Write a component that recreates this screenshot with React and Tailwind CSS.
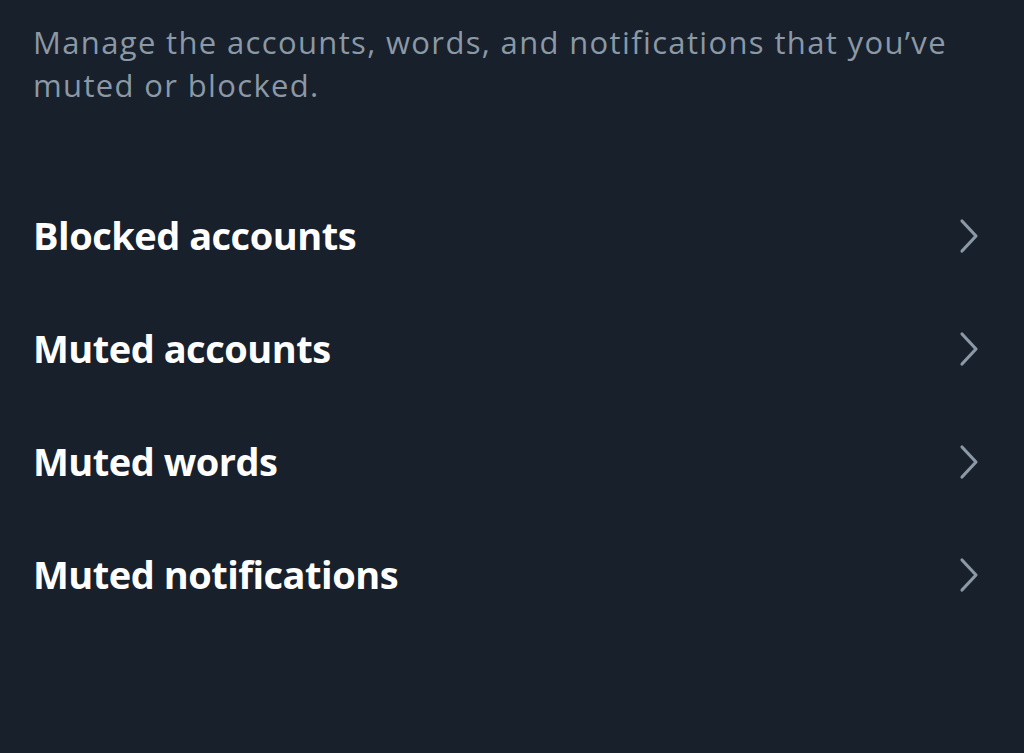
import React from 'react';

const items = ['Blocked accounts', 'Muted accounts', 'Muted words', 'Muted notifications'];

const Chevron = () => (
    <svg width="22" height="36" viewBox="0 0 22 36" fill="none" className="shrink-0">
        <path d="M4 3 L18 18 L4 33" stroke="#8b98a5" strokeWidth="3.2" strokeLinecap="round" strokeLinejoin="round" />
    </svg>
);

const App = () => {
    return (
        <div className="w-[1024px] h-[753px] bg-[#18202b] overflow-hidden" style={{ fontFamily: '"Open Sans", "Liberation Sans", sans-serif' }}>
            <p className="m-0 pl-[33px] pr-[50px] pt-[21px] text-[31px] leading-[43px] text-[#8b98a5] tracking-[1.35px]">
                Manage the accounts, words, and notifications that you’ve muted or blocked.
            </p>
            <div className="mt-[72px] flex flex-col">
                {items.map((label) => (
                    <div key={label} className="flex items-center justify-between pl-[33px] pr-[44px] h-[113px]">
                        <span className="text-[38px] font-bold text-white tracking-[-0.5px]">{label}</span>
                        <Chevron />
                    </div>
                ))}
            </div>
        </div>
    );
};

export default App;
